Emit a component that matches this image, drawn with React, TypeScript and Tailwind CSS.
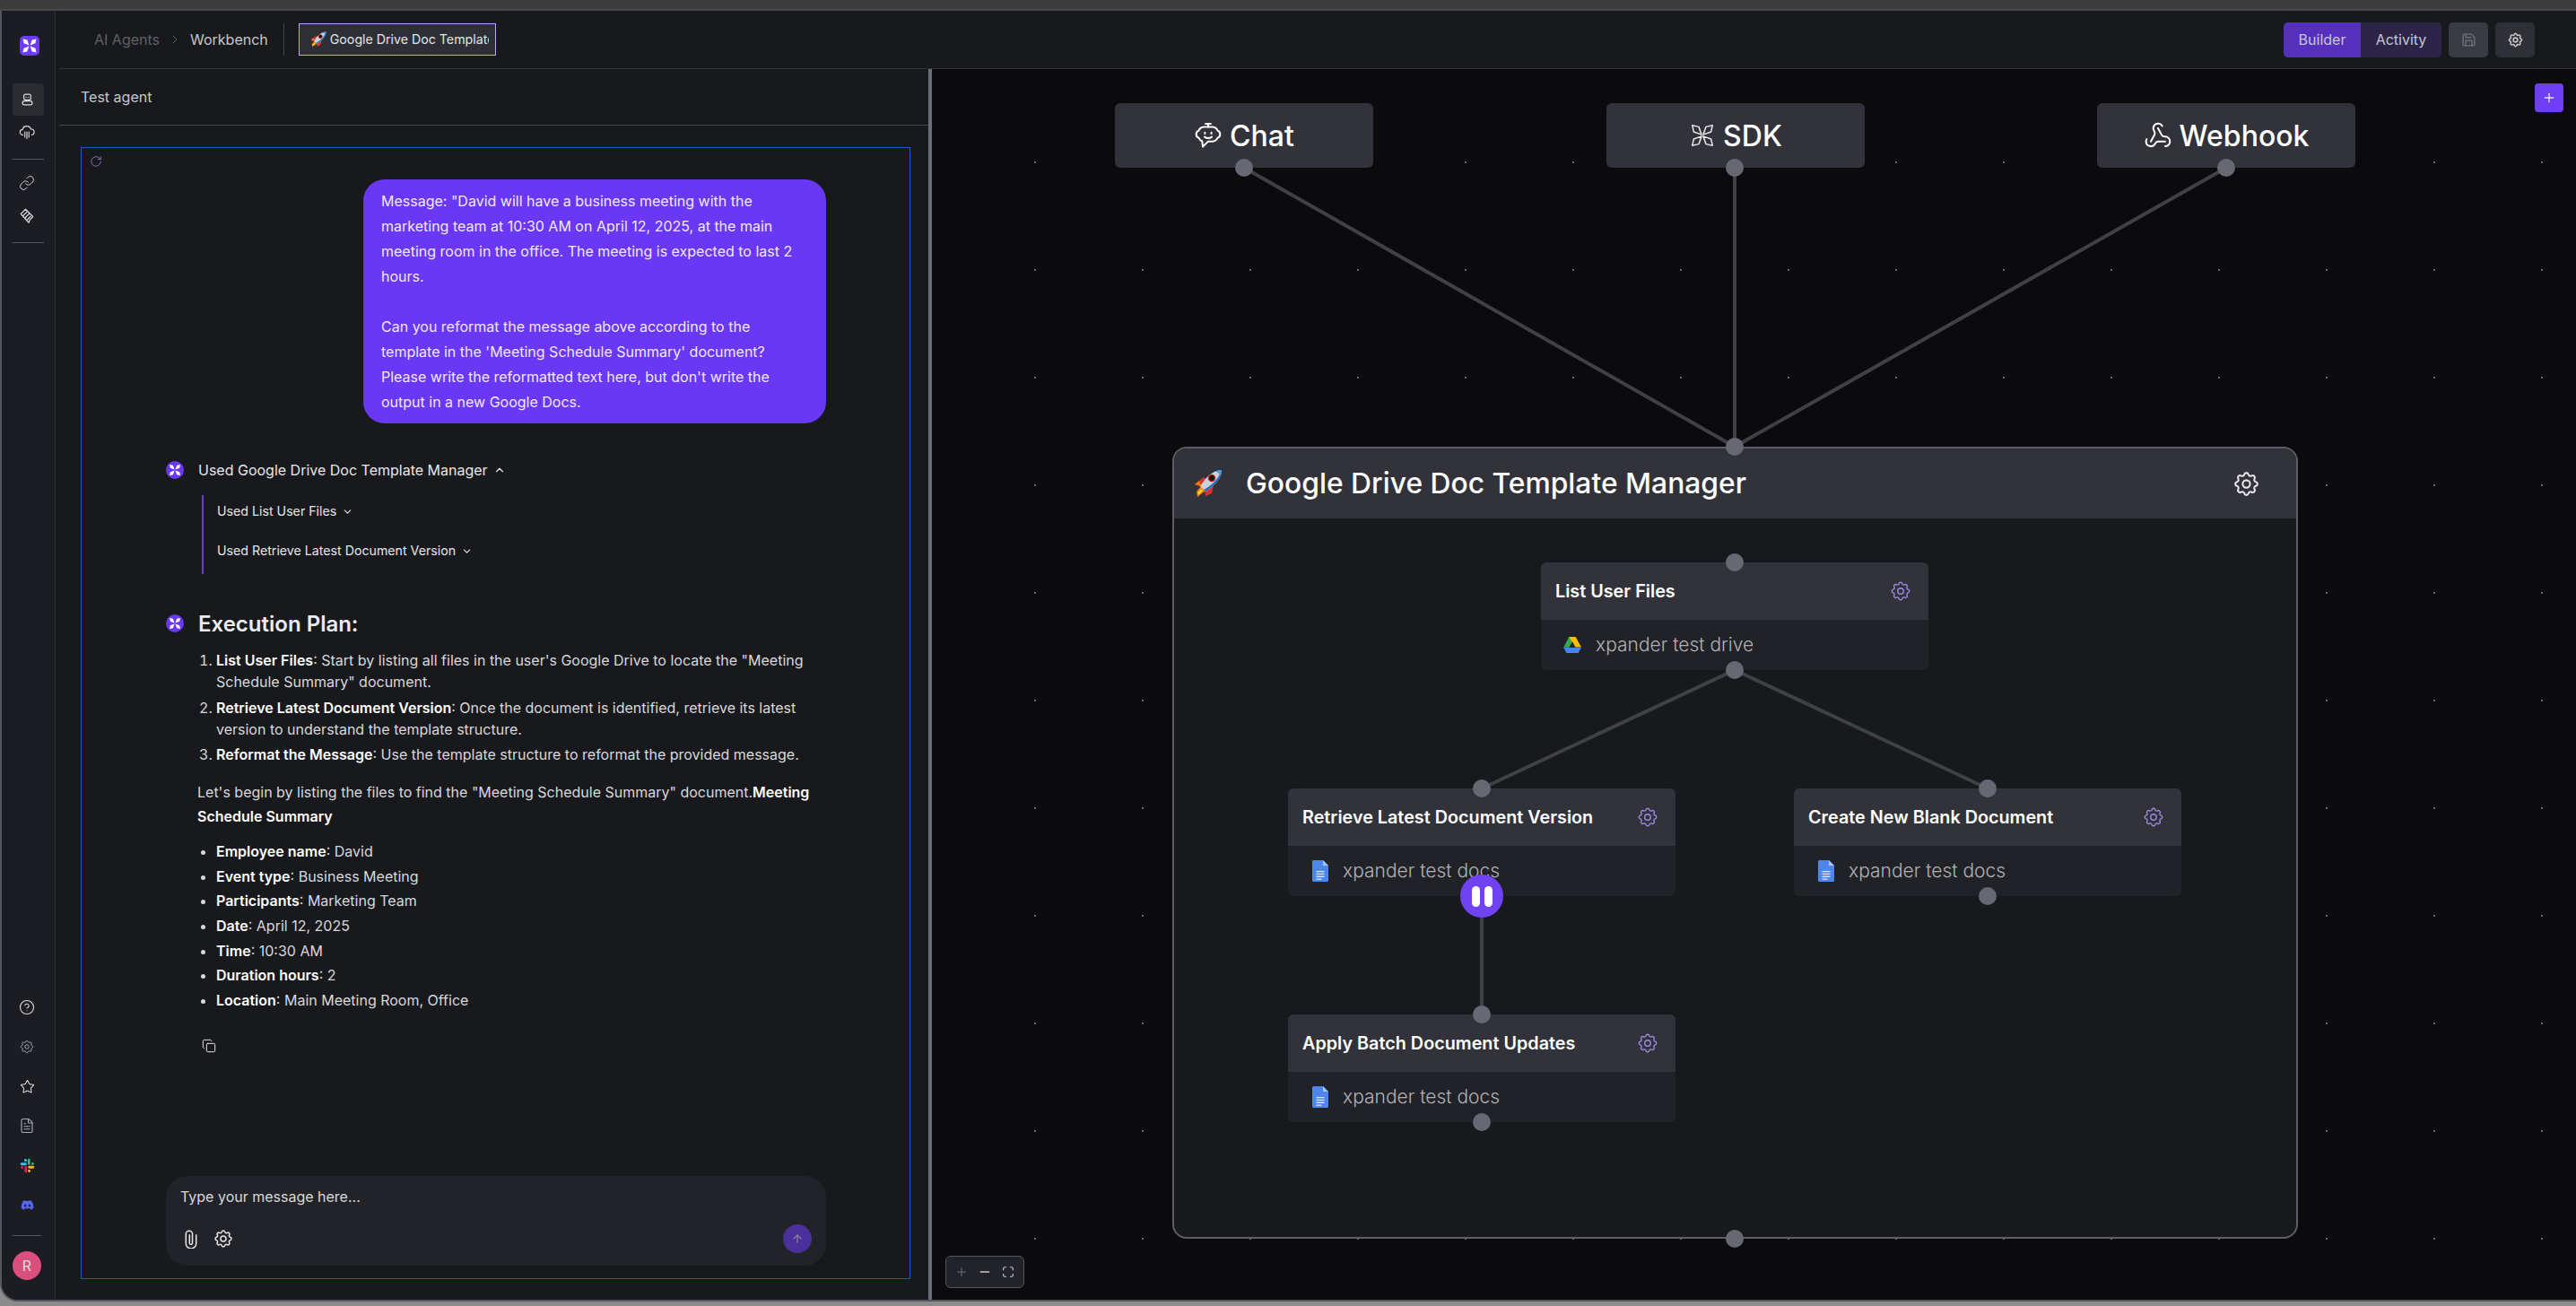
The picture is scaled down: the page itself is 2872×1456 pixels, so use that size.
import { ArrowUp, ChevronDown, ChevronRight, ChevronUp, CircleHelp, Copy, FileText, Link, Maximize, Minus, Plus, RotateCw, Save, Star, Webhook } from 'lucide-react'
import { FaDiscord } from 'react-icons/fa'
import { TbSettings } from 'react-icons/tb'

const font = { fontFamily: 'Inter, "Noto Sans", sans-serif' }

const steps = [
  { title: 'List User Files', text: ": Start by listing all files in the user's Google Drive to locate the \"Meeting Schedule Summary\" document." },
  { title: 'Retrieve Latest Document Version', text: ': Once the document is identified, retrieve its latest version to understand the template structure.' },
  { title: 'Reformat the Message', text: ': Use the template structure to reformat the provided message.' },
]

const summary = [
  ['Employee name', 'David'],
  ['Event type', 'Business Meeting'],
  ['Participants', 'Marketing Team'],
  ['Date', 'April 12, 2025'],
  ['Time', '10:30 AM'],
  ['Duration hours', '2'],
  ['Location', 'Main Meeting Room, Office'],
]

function XMark({ className = '', outline = false }: { className?: string; outline?: boolean }) {
  return (
    <svg
      viewBox="0 0 24 24"
      className={className}
      fill={outline ? 'none' : 'white'}
      stroke={outline ? '#e6e6e8' : 'none'}
      strokeWidth={outline ? 1.2 : 0}
      strokeLinejoin="round"
    >
      <path d="M3 3 8.800 4.300 11.300 11.300 4.300 8.800Z" />
      <path d="M21 3 15.200 4.300 12.700 11.300 19.700 8.800Z" />
      <path d="M3 21 8.800 19.700 11.300 12.700 4.300 15.200Z" />
      <path d="M21 21 15.200 19.700 12.700 12.700 19.700 15.200Z" />
    </svg>
  )
}

function Rocket({ className = '' }: { className?: string }) {
  return (
    <svg viewBox="0 0 32 32" className={className}>
      <path d="M11 9 1 17l8 3 5-8Z" fill="#d9342b" />
      <path d="M1 17l5-4 2 6Z" fill="#f57c00" />
      <path d="M22 18l-2 9-7 3-1-6Z" fill="#d9342b" />
      <path d="M8 19l5 5-9 7-1-6Z" fill="#f57c00" />
      <path d="M8 22l2 2-5 5-.500-3Z" fill="#fdd835" />
      <path d="M31 1C24 1 16 6 10 15l-3 4 6 6 4-3C26 16 31 8 31 1Z" fill="#c9d2d8" />
      <path d="M31 1c0 7-5 15-14 21l-4 3-2-2 5-3c7-5 12-11 15-19Z" fill="#1f6fc4" />
      <path d="M31 1c-2 0-4 .400-6 1.200L29.800 7C30.600 5 31 3 31 1Z" fill="#4a9be0" />
      <circle cx="20" cy="10" r="3.600" fill="#111" stroke="#c62828" strokeWidth="1.400" />
    </svg>
  )
}

function DriveIcon({ className = '' }: { className?: string }) {
  return (
    <svg viewBox="0 0 24 22" className={className}>
      <path d="M8 1h8L8.500 14H1.200Z" fill="#34a853" />
      <path d="M8 1h8l7 12.800h-7.500Z" fill="#fbbc04" />
      <path d="M1.200 14 4.800 21H19.500L23 14Z" fill="#4285f4" />
      <path d="M8 14.200 12 7l4 7.200Z" fill="#26282e" />
    </svg>
  )
}

function DocsIcon({ className = '' }: { className?: string }) {
  return (
    <svg viewBox="0 0 18 24" className={className}>
      <path d="M2 0h10l6 6v16.500a1.500 1.500 0 0 1-1.500 1.500h-15A1.500 1.500 0 0 1 0 22.500v-21A1.500 1.500 0 0 1 1.500 0Z" fill="#4f86ec" />
      <path d="M12 0l6 6h-6Z" fill="#a8c4f7" />
      <path d="M4.500 12h9v1.300h-9Zm0 2.800h9v1.300h-9Zm0 2.800h9v1.300h-9Zm0 2.800h6v1.300h-6Z" fill="#d7e3fb" />
    </svg>
  )
}

function SlackIcon({ className = '' }: { className?: string }) {
  return (
    <svg viewBox="0 0 24 24" className={className}>
      <path d="M9 1.500a2 2 0 0 0 0 4h2v-2a2 2 0 0 0-2-2Zm-6 6a2 2 0 0 0 0 4h6a2 2 0 0 0 0-4Z" fill="#36c5f0" />
      <path d="M22.500 9a2 2 0 0 0-4 0v2h2a2 2 0 0 0 2-2Zm-6-6a2 2 0 0 0-4 0v6a2 2 0 0 0 4 0Z" fill="#2eb67d" />
      <path d="M15 22.500a2 2 0 0 0 0-4h-2v2a2 2 0 0 0 2 2Zm6-6a2 2 0 0 0 0-4h-6a2 2 0 0 0 0 4Z" fill="#ecb22e" />
      <path d="M1.500 15a2 2 0 0 0 4 0v-2h-2a2 2 0 0 0-2 2Zm6 6a2 2 0 0 0 4 0v-6a2 2 0 0 0-4 0Z" fill="#e01e5a" />
    </svg>
  )
}

function BotIcon({ className = '' }: { className?: string }) {
  return (
    <svg viewBox="0 0 16 18" className={className} fill="none" stroke="currentColor" strokeWidth="1.500">
      <rect x="3" y="1.500" width="10" height="8" rx="2.500" />
      <rect x="1" y="11" width="14" height="5.500" rx="2.700" />
      <path d="M6.300 5v1.500M9.700 5v1.500" />
    </svg>
  )
}

function CloudIcon({ className = '' }: { className?: string }) {
  return (
    <svg viewBox="0 0 24 24" className={className} fill="none" stroke="currentColor" strokeWidth="1.500" strokeLinecap="round">
      <path d="M6 16.500a4 4 0 0 1-.5-8A6.500 6.500 0 0 1 18 8a4.200 4.200 0 0 1 1 8.500" />
      <path d="M9 12v8M12 12v10M15 12v8" />
    </svg>
  )
}

function LayersIcon({ className = '' }: { className?: string }) {
  return (
    <svg viewBox="0 0 24 24" className={className} fill="none" stroke="currentColor" strokeWidth="1.500" strokeLinejoin="round">
      <path d="M3 10 10 3l11 11-5 5-1 4-3-3Z" />
      <path d="M6 13l7-7M9 16l7-7M12 19l6-6" />
    </svg>
  )
}

function ChatBotIcon({ className = '' }: { className?: string }) {
  return (
    <svg viewBox="0 0 24 24" className={className} fill="none" stroke="currentColor" strokeWidth="1.500" strokeLinecap="round" strokeLinejoin="round">
      <path d="M12 2.200v2.600M9.800 2.200h4.400" />
      <path d="M8.500 4.800h7a5 5 0 0 1 4.400 3.200 3.200 3.200 0 0 1 0 6A5 5 0 0 1 15.500 17H12l-4.500 4.500-.5-4.700A5 5 0 0 1 4.100 14a3.200 3.200 0 0 1 0-6 5 5 0 0 1 4.400-3.200Z" />
      <path d="M9.300 9.500v1M14.700 9.500v1M9 13.200c1.700 1.300 4.300 1.300 6 0" />
    </svg>
  )
}

function PaperclipIcon({ className = '' }: { className?: string }) {
  return (
    <svg viewBox="0 0 16 22" className={className} fill="none" stroke="currentColor" strokeWidth="1.600" strokeLinecap="round">
      <path d="M14 6v10a6 6 0 0 1-12 0V5a3.800 3.800 0 0 1 7.600 0v10.500a1.700 1.700 0 0 1-3.400 0V6" />
    </svg>
  )
}

function NodeHandle({ x, y }: { x: number; y: number }) {
  return (
    <div
      className="absolute h-[20px] w-[20px] -translate-x-1/2 -translate-y-1/2 rounded-full bg-[#666873]"
      style={{ left: x, top: y }}
    />
  )
}

function TriggerNode({ x, icon, label }: { x: number; icon: React.ReactNode; label: string }) {
  return (
    <div
      className="absolute top-[38px] flex h-[72px] w-[288px] items-center justify-center gap-[8px] rounded-[6px] bg-[#32333a] text-[32px] font-medium text-white"
      style={{ left: x }}
    >
      {icon}
      <span className="pt-[2px]">{label}</span>
    </div>
  )
}

function ToolNode({ x, y, title, icon, sub }: { x: number; y: number; title: string; icon: React.ReactNode; sub: string }) {
  return (
    <div className="absolute w-[432px] overflow-hidden rounded-[6px] bg-[#212227]" style={{ left: x, top: y }}>
      <div className="flex h-[64px] items-center justify-between bg-[#32333a] pl-4 pr-[18px] text-[19.8px] font-semibold text-white">
        <span className="pt-[2px]">{title}</span>
        <TbSettings className="h-[26px] w-[26px] text-[#a08be8]" strokeWidth={1.25} />
      </div>
      <div className="flex h-[56px] items-center pl-[24px] text-[21px] font-light text-[#b0b1b6]">
        <div className="w-[37px]">{icon}</div>
        <span>{sub}</span>
      </div>
    </div>
  )
}

// canvas coordinates are written as picture pixels, minus the canvas origin
const ox = 1039
const oy = 77

const edges = [
  [1387, 187, 1934, 498],
  [1934, 187, 1934, 498],
  [2482, 187, 1934, 498],
  [1934, 747, 1652, 879],
  [1934, 747, 2216, 879],
  [1652, 1023, 1652, 1131],
]

const handles = [
  [1387, 187], [1934, 187], [2482, 187], [1934, 498], [1934, 627], [1934, 747],
  [1652, 879], [2216, 879], [2216, 999], [1652, 1131], [1652, 1251], [1934, 1381],
]

export default function App() {
  return (
    <div style={font} className="flex h-[1456px] w-[2872px] flex-col overflow-hidden bg-[#8b8b8b] text-white">
      <div className="h-[12px] shrink-0 border-b-[2px] border-[#4a4a4a] bg-[#3c3c3c]" />
      <div className="flex min-h-0 flex-1 overflow-hidden rounded-bl-[20px] border-b-[2px] border-l-[2px] border-[#55565c] bg-[#18191d]">
        <aside className="flex w-[60px] shrink-0 flex-col items-center border-r border-[#2b2c32] bg-[#1c1d22] pb-[22px] pr-[3px] text-[#dcdcdf]">
          <div className="ml-[6px] mt-[28px] flex h-[22px] w-[22px] items-center justify-center rounded-[5px] bg-[#6c3cf5]">
            <XMark className="h-[20px] w-[20px]" />
          </div>
          <div className="ml-[3px] mt-[31px] flex h-[36px] w-[35px] items-center justify-center rounded-[4px] bg-[#2b2c32] pr-[2px]">
            <BotIcon className="h-[14px] w-[13px]" />
          </div>
          <CloudIcon className="mt-[9px] h-[18px] w-[18px]" />
          <div className="ml-[3px] mt-[21px] h-px w-[35px] bg-[#55565c]" />
          <Link className="mt-[17px] h-[18px] w-[18px]" strokeWidth={1.25} />
          <LayersIcon className="mt-[18px] h-[18px] w-[18px]" />
          <div className="ml-[3px] mt-[21px] h-px w-[35px] bg-[#55565c]" />
          <div className="mt-auto flex flex-col items-center">
            <div className="flex h-[44px] items-center"><CircleHelp className="h-[18px] w-[18px]" strokeWidth={1.5} /></div>
            <div className="flex h-[44px] items-center"><TbSettings className="h-[18px] w-[18px] text-[#a9aab0]" strokeWidth={1.25} /></div>
            <div className="flex h-[44px] items-center"><Star className="h-[17px] w-[17px]" strokeWidth={1.5} /></div>
            <div className="flex h-[44px] items-center"><FileText className="h-[18px] w-[18px] text-[#a9aab0]" strokeWidth={1.5} /></div>
            <div className="flex h-[44px] items-center"><SlackIcon className="h-[17px] w-[17px]" /></div>
            <div className="flex h-[44px] items-center"><FaDiscord className="h-[15px] w-[15px] text-[#5865f2]" /></div>
          </div>
          <div className="mt-[12px] h-px w-[32px] bg-[#55565c]" />
          <div className="mt-[17px] flex h-[32px] w-[32px] items-center justify-center rounded-full bg-[#db4f7f] text-[16px]">R</div>
        </aside>

        <div className="flex min-w-0 flex-1 flex-col pl-[4px]">
          <header className="flex h-[65px] shrink-0 items-center border-b border-[#33343a] pl-[39px] pr-[46px]">
            <span className="text-[16px] text-[#5f6068]">AI Agents</span>
            <ChevronRight className="mx-[9px] h-[16px] w-[16px] text-[#5f6068]" strokeWidth={1.5} />
            <span className="text-[16px] text-[#c6c6ca]">Workbench</span>
            <div className="ml-[17px] h-[36px] w-px bg-[#44454b]" />
            <div className="ml-[16px] flex h-[36px] w-[220px] items-center gap-[4px] overflow-hidden border border-[#b9a6ff] bg-[#2e2f36] pl-[12px] pr-[7px] text-[14.2px] text-[#e4e4e7]">
              <Rocket className="h-[18px] w-[18px] shrink-0" />
              <span className="min-w-0 overflow-hidden whitespace-nowrap">Google Drive Doc Template Manager</span>
            </div>
            <div className="ml-auto flex h-[39px] overflow-hidden rounded-[5px] text-[16px] text-[#c8c5d3]">
              <div className="flex w-[86px] items-center justify-center bg-[#5530bd]">Builder</div>
              <div className="flex w-[90px] items-center justify-center bg-[#2d2547]">Activity</div>
            </div>
            <div className="ml-[8px] flex h-[39px] w-[44px] items-center justify-center rounded-[5px] bg-[#3a3b42]">
              <Save className="h-[17px] w-[17px] text-[#6e6f77]" />
            </div>
            <div className="ml-[8px] flex h-[39px] w-[44px] items-center justify-center rounded-[5px] bg-[#2f3036]">
              <TbSettings className="h-[19px] w-[19px] text-[#c6c6ca]" />
            </div>
          </header>

          <div className="flex min-h-0 flex-1">
            <section className="flex w-[969px] shrink-0 flex-col">
              <div className="flex h-[63px] shrink-0 items-center border-b border-[#46474e] pl-[24px] text-[16px] text-[#c6c6ca]">Test agent</div>
              <div className="flex min-h-0 flex-1 flex-col pb-[23px] pl-[24px] pr-[20px] pt-[24px]">
                <div className="flex min-h-0 flex-1 flex-col border border-[#1f58c9] pb-[14px]">
                  <RotateCw className="ml-[9px] mt-[8px] h-[14px] w-[14px] text-[#8f7ad6]" strokeWidth={1.5} />
                  <div className="ml-[314px] mt-[13px] w-[516px] rounded-[24px] bg-[#6a37f4] px-[20px] py-[10px] text-[16px] leading-[28px] text-[#eee9ff]">
                    <p>Message: "David will have a business meeting with the marketing team at 10:30 AM on April 12, 2025, at the main meeting room in the office. The meeting is expected to last 2 hours.</p>
                    <p className="mt-[28px]">Can you reformat the message above according to the template in the 'Meeting Schedule Summary' document? Please write the reformatted text here, but don't write the output in a new Google Docs.</p>
                  </div>

                  <div className="ml-[94px] mt-[40px] flex h-[24px] items-center text-[16px] text-[#e6e6e8]">
                    <div className="flex h-[20px] w-[20px] items-center justify-center rounded-full bg-[#6a37f4]">
                      <XMark className="h-[16px] w-[16px]" />
                    </div>
                    <span className="ml-[16px]">Used Google Drive Doc Template Manager</span>
                    <ChevronUp className="ml-[6px] h-[14px] w-[14px]" />
                  </div>
                  <div className="ml-[134px] mt-[16px] flex w-[500px] flex-col gap-[8px] border-l-[2px] border-[#6a37f4] pb-[8px] pl-[15px] text-[14.2px] text-[#e6e6e8]">
                    <div className="flex h-[36px] items-center">Used List User Files<ChevronDown className="ml-[6px] h-[13px] w-[13px]" /></div>
                    <div className="flex h-[36px] items-center">Used Retrieve Latest Document Version<ChevronDown className="ml-[6px] h-[13px] w-[13px]" /></div>
                  </div>

                  <div className="ml-[94px] mt-[39px] flex items-center">
                    <div className="-mt-[3px] flex h-[20px] w-[20px] items-center justify-center rounded-full bg-[#6a37f4]">
                      <XMark className="h-[16px] w-[16px]" />
                    </div>
                    <h2 className="ml-[16px] text-[24px] font-semibold leading-[34px] text-[#ececee]">Execution Plan:</h2>
                  </div>
                  <ol className="ml-[130px] mt-[11px] flex w-[680px] list-decimal flex-col gap-[4.5px] pl-[20px] text-[16px] leading-[24px] text-[#d8d8db]">
                    {steps.map((s) => (
                      <li key={s.title}><strong className="font-semibold text-white">{s.title}</strong>{s.text}</li>
                    ))}
                  </ol>
                  <p className="ml-[129px] mt-[17px] w-[700px] text-[16px] leading-[27px] text-[#d8d8db]">
                    Let's begin by listing the files to find the "Meeting Schedule Summary" document.<strong className="font-semibold text-white">Meeting Schedule Summary</strong>
                  </p>
                  <ul className="ml-[130px] mt-[13px] flex list-disc flex-col gap-[3.7px] pl-[20px] text-[16px] leading-[24px] text-[#d8d8db]">
                    {summary.map(([k, v]) => (
                      <li key={k}><strong className="font-semibold text-white">{k}</strong>: {v}</li>
                    ))}
                  </ul>
                  <Copy className="ml-[134px] mt-[31px] h-[16px] w-[16px] text-[#e6e6e8]" strokeWidth={1.5} />

                  <div className="ml-[94px] mt-auto flex h-[100px] w-[736px] shrink-0 flex-col rounded-[24px] bg-[#222329] px-[16px] pb-[14px] pt-[11px]">
                    <span className="text-[16px] text-[#d8d8db]">Type your message here...</span>
                    <div className="mt-auto flex items-center">
                      <PaperclipIcon className="ml-[4px] h-[21px] w-[16px] text-[#e6e6e8]" />
                      <TbSettings className="ml-[16px] h-[24px] w-[24px] text-[#e6e6e8]" strokeWidth={1.5} />
                      <div className="ml-auto flex h-[32px] w-[32px] items-center justify-center rounded-full bg-[#49309a]">
                        <ArrowUp className="h-[14px] w-[14px] text-[#8c86a0]" />
                      </div>
                    </div>
                  </div>
                </div>
              </div>
            </section>

            <div className="w-[4px] shrink-0 bg-[#6b6d7a]" />

            <main className="relative min-w-0 flex-1 overflow-hidden bg-[#0b0b0e] bg-[radial-gradient(circle,#6b6d75_1px,transparent_1.5px)] bg-[position:55px_44px] bg-[size:120px_120px]">
              <TriggerNode x={1243 - ox} label="Chat" icon={<ChatBotIcon className="h-[32px] w-[32px]" />} />
              <TriggerNode x={1791 - ox} label="SDK" icon={<XMark outline className="h-[30px] w-[30px]" />} />
              <TriggerNode x={2338 - ox} label="Webhook" icon={<Webhook className="h-[32px] w-[32px]" strokeWidth={1.5} />} />

              <div className="absolute left-[268px] top-[421px] h-[883px] w-[1255px] overflow-hidden rounded-[16px] border-2 border-[#5c5d66] bg-[#18191d]">
                <div className="flex h-[78px] items-center justify-between bg-[#32333a] pl-[22px] pr-[39px]">
                  <div className="flex items-center gap-[26px] text-[31.8px] font-medium text-white">
                    <Rocket className="h-[32px] w-[32px]" />
                    <span>Google Drive Doc Template Manager</span>
                  </div>
                  <TbSettings className="h-[33px] w-[33px] text-[#e6e6e8]" strokeWidth={1.5} />
                </div>
              </div>

              <ToolNode x={1718 - ox} y={627 - oy} title="List User Files" sub="xpander test drive" icon={<DriveIcon className="h-[20px] w-[22px]" />} />
              <ToolNode x={1436 - ox} y={879 - oy} title="Retrieve Latest Document Version" sub="xpander test docs" icon={<DocsIcon className="ml-[3px] h-[24px] w-[18px]" />} />
              <ToolNode x={2000 - ox} y={879 - oy} title="Create New Blank Document" sub="xpander test docs" icon={<DocsIcon className="ml-[3px] h-[24px] w-[18px]" />} />
              <ToolNode x={1436 - ox} y={1131 - oy} title="Apply Batch Document Updates" sub="xpander test docs" icon={<DocsIcon className="ml-[3px] h-[24px] w-[18px]" />} />

              <svg className="pointer-events-none absolute left-0 top-0 h-full w-full">
                {edges.map(([x1, y1, x2, y2], i) => (
                  <line key={i} x1={x1 - ox} y1={y1 - oy} x2={x2 - ox} y2={y2 - oy} stroke="#404147" strokeWidth={4} />
                ))}
              </svg>

              {handles.map(([x, y]) => (
                <NodeHandle key={`${x}-${y}`} x={x - ox} y={y - oy} />
              ))}

              <div className="absolute left-[589px] top-[898px] flex h-[48px] w-[48px] items-center justify-center gap-[5px] rounded-full bg-[#6f42f2]">
                <div className="h-[23px] w-[9px] rounded-full bg-white" />
                <div className="h-[23px] w-[9px] rounded-full bg-white" />
              </div>

              <div className="absolute left-[1787px] top-[16px] flex h-[32px] w-[32px] items-center justify-center rounded-[4px] bg-[#6f3ff5]">
                <Plus className="h-[16px] w-[16px] text-[#e9e4ff]" strokeWidth={2} />
              </div>

              <div className="absolute bottom-[13px] left-[15px] flex h-[36px] w-[88px] items-center justify-center rounded-[6px] border border-[#55565c] bg-[#222329]">
                <div className="flex w-[26px] justify-center"><Plus className="h-[16px] w-[16px] text-[#6e6f77]" strokeWidth={1.5} /></div>
                <div className="flex w-[26px] justify-center"><Minus className="h-[16px] w-[16px] text-[#c6c6ca]" strokeWidth={2} /></div>
                <div className="flex w-[26px] justify-center"><Maximize className="h-[14px] w-[14px] text-[#c6c6ca]" strokeWidth={2} /></div>
              </div>
            </main>
          </div>
        </div>
      </div>
      <div className="h-[5px] shrink-0" />
    </div>
  )
}
